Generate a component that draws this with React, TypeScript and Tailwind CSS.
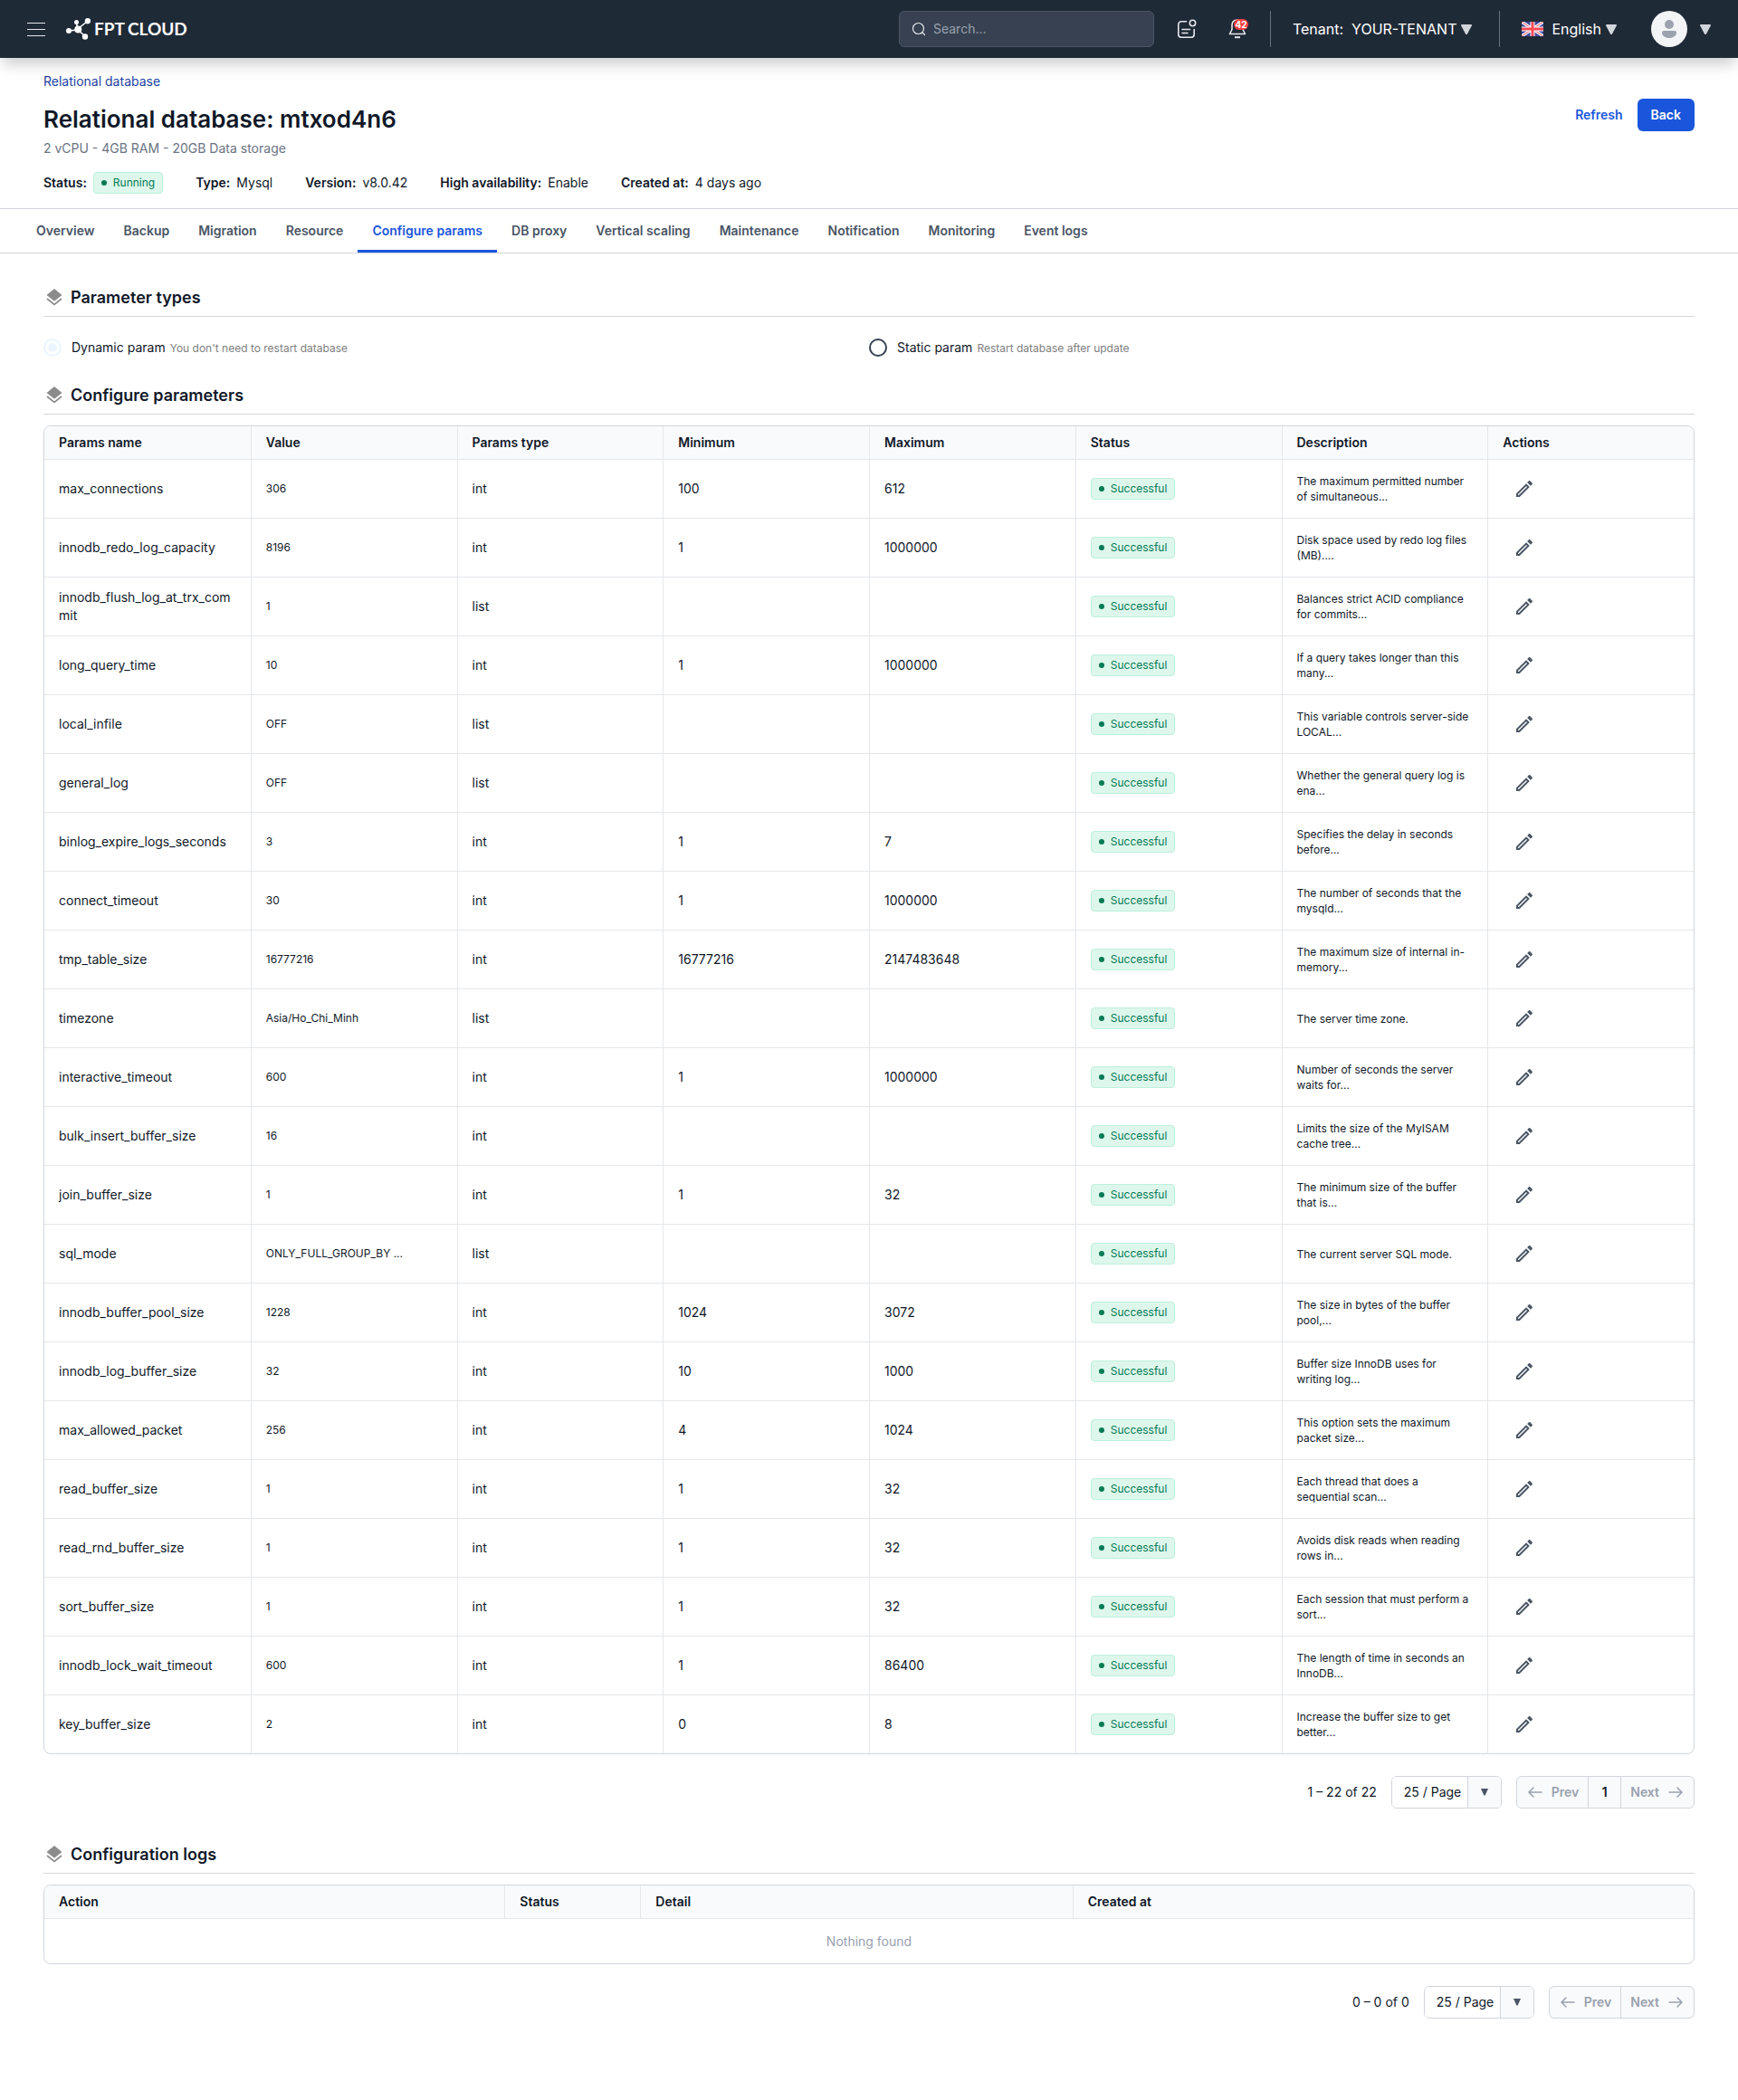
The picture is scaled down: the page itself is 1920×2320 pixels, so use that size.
import { useState } from "react";

type Param = [name: string, value: string, type: string, min: string, max: string, description: string];

const params: Param[] = [
  ["max_connections", "306", "int", "100", "612", "The maximum permitted number of simultaneous..."],
  ["innodb_redo_log_capacity", "8196", "int", "1", "1000000", "Disk space used by redo log files (MB)...."],
  ["innodb_flush_log_at_trx_commit", "1", "list", "", "", "Balances strict ACID compliance for commits..."],
  ["long_query_time", "10", "int", "1", "1000000", "If a query takes longer than this many..."],
  ["local_infile", "OFF", "list", "", "", "This variable controls server-side LOCAL..."],
  ["general_log", "OFF", "list", "", "", "Whether the general query log is ena..."],
  ["binlog_expire_logs_seconds", "3", "int", "1", "7", "Specifies the delay in seconds before..."],
  ["connect_timeout", "30", "int", "1", "1000000", "The number of seconds that the mysqld..."],
  ["tmp_table_size", "16777216", "int", "16777216", "2147483648", "The maximum size of internal in-memory..."],
  ["timezone", "Asia/Ho_Chi_Minh", "list", "", "", "The server time zone."],
  ["interactive_timeout", "600", "int", "1", "1000000", "Number of seconds the server waits for..."],
  ["bulk_insert_buffer_size", "16", "int", "", "", "Limits the size of the MyISAM cache tree..."],
  ["join_buffer_size", "1", "int", "1", "32", "The minimum size of the buffer that is..."],
  ["sql_mode", "ONLY_FULL_GROUP_BY ...", "list", "", "", "The current server SQL mode."],
  ["innodb_buffer_pool_size", "1228", "int", "1024", "3072", "The size in bytes of the buffer pool,..."],
  ["innodb_log_buffer_size", "32", "int", "10", "1000", "Buffer size InnoDB uses for writing log..."],
  ["max_allowed_packet", "256", "int", "4", "1024", "This option sets the maximum packet size..."],
  ["read_buffer_size", "1", "int", "1", "32", "Each thread that does a sequential scan..."],
  ["read_rnd_buffer_size", "1", "int", "1", "32", "Avoids disk reads when reading rows in..."],
  ["sort_buffer_size", "1", "int", "1", "32", "Each session that must perform a sort..."],
  ["innodb_lock_wait_timeout", "600", "int", "1", "86400", "The length of time in seconds an InnoDB..."],
  ["key_buffer_size", "2", "int", "0", "8", "Increase the buffer size to get better..."],
];

const paramColumns = ["Params name", "Value", "Params type", "Minimum", "Maximum", "Status", "Description", "Actions"];

const tabs = [
  "Overview",
  "Backup",
  "Migration",
  "Resource",
  "Configure params",
  "DB proxy",
  "Vertical scaling",
  "Maintenance",
  "Notification",
  "Monitoring",
  "Event logs",
];

function Caret() {
  return (
    <svg viewBox="0 0 12 11" className="h-[11px] w-3 text-gray-300" fill="currentColor" aria-hidden="true">
      <path d="M.9 0h10.200c.7 0 1.100.7.8 1.300L7 10.400c-.4.8-1.500.8-2 0L.1 1.300C-.2.700.2 0 .9 0z" />
    </svg>
  );
}

function Logo() {
  return (
    <a href="#home" className="flex items-center gap-1 text-white" aria-label="FPT Cloud">
      <svg viewBox="0 0 27 24" className="h-6 w-[27px]" fill="currentColor" aria-hidden="true">
        <path d="M3 14l10-1M11 4l2 8M24 3L13 12M13 13l8 7" stroke="currentColor" strokeWidth="1.600" fill="none" />
        <circle cx="3" cy="14" r="3" />
        <circle cx="11.500" cy="4.500" r="2.500" />
        <circle cx="24" cy="3.200" r="3.200" />
        <circle cx="13.300" cy="12.500" r="4" />
        <circle cx="21" cy="20.500" r="3.200" />
      </svg>
      <span className="flex gap-[3px] font-['Lato',sans-serif] text-[19px] leading-6 font-bold">
        <span>FPT</span>
        <span>CLOUD</span>
      </span>
    </a>
  );
}

function Flag() {
  return (
    <svg viewBox="0 0 24 16" className="h-4 w-6" aria-hidden="true">
      <path fill="#3f4a9e" d="M0 0h24v16H0z" />
      <path d="M0 0l24 16M24 0L0 16" stroke="#fff" strokeWidth="3.200" />
      <path d="M0 0l24 16M24 0L0 16" stroke="#ff4b55" strokeWidth="1" />
      <path d="M12 0v16M0 8h24" stroke="#fff" strokeWidth="5" />
      <path d="M12 0v16M0 8h24" stroke="#ff4b55" strokeWidth="3" />
    </svg>
  );
}

function Header() {
  return (
    <header className="relative z-10 flex h-16 items-center justify-between bg-[#1f2a37] px-[30px] text-white shadow-[0_10px_15px_-3px_rgba(0,0,0,0.2)]">
      <div className="flex items-center gap-[23px]">
        <button type="button" aria-label="Menu" className="flex w-5 flex-col gap-[6px]">
          <span className="h-px w-5 bg-gray-200" />
          <span className="h-px w-5 bg-gray-200" />
          <span className="h-px w-5 bg-gray-200" />
        </button>
        <Logo />
      </div>
      <div className="flex items-center">
        <label className="flex h-10 w-[282px] items-center gap-2 rounded-md border border-gray-600 bg-[#374151] pl-[13px]">
          <svg viewBox="0 0 16 16" className="size-4 text-gray-200" fill="none" stroke="currentColor" strokeWidth="1.200" aria-hidden="true">
            <circle cx="7.500" cy="7.500" r="6" />
            <path d="M12 12l2.500 2.500" strokeLinecap="round" />
          </svg>
          <input type="search" aria-label="Search" placeholder="Search..." className="min-w-0 flex-1 bg-transparent text-sm outline-none placeholder:text-gray-400" />
        </label>
        <button type="button" aria-label="News" className="ml-[25px]">
          <svg viewBox="0 0 22 22" className="size-[22px] text-gray-200" fill="none" stroke="currentColor" strokeWidth="1.600" strokeLinecap="round" aria-hidden="true">
            <path d="M10.500 2.800H5A3.200 3.200 0 0 0 1.800 6v11A3.200 3.200 0 0 0 5 20.200h11a3.200 3.200 0 0 0 3.200-3.200v-5.500" />
            <circle cx="17.500" cy="4.500" r="3.200" />
            <path d="M6 11.500h8.500M6 15.500h6" />
          </svg>
        </button>
        <button type="button" aria-label="Notifications" className="relative ml-[35px]">
          <svg viewBox="0 0 20 22" className="h-[22px] w-5 text-gray-200" fill="none" stroke="currentColor" strokeWidth="1.600" aria-hidden="true">
            <path d="M10 1C6 1 4 3.500 4 7v4.500L1.500 16.500h17L16 11.500V7c0-3.500-2-6-6-6z" strokeLinejoin="round" />
            <path d="M7 20.200h6" strokeWidth="2" />
          </svg>
          <span className="absolute top-0 left-[6px] flex h-3 w-4 items-center justify-center rounded-full bg-[#f04040] text-[10px] leading-3 font-bold">42</span>
        </button>
        <span className="ml-[26px] h-10 w-px bg-gray-500" />
        <button type="button" className="ml-6 flex items-center gap-[5px] text-base">
          <span>Tenant:&nbsp; YOUR-TENANT</span>
          <Caret />
        </button>
        <span className="ml-[30px] h-10 w-px bg-gray-500" />
        <button type="button" className="ml-6 flex items-center gap-[5px] text-base">
          <Flag />
          <span className="ml-1">English</span>
          <Caret />
        </button>
        <button type="button" aria-label="Account" className="ml-[38px] flex items-center gap-[14px]">
          <svg viewBox="0 0 40 40" className="size-10" aria-hidden="true">
            <circle cx="20" cy="20" r="20" fill="#f3f4f6" />
            <circle cx="20" cy="15" r="5" fill="#9ca3af" />
            <path d="M14 22h12a2 2 0 0 1 2 2c0 3.500-3.500 6-8 6s-8-2.500-8-6a2 2 0 0 1 2-2z" fill="#9ca3af" />
          </svg>
          <Caret />
        </button>
      </div>
    </header>
  );
}

function Badge({ children }: { children: string }) {
  return (
    <span className="inline-flex h-6 items-center gap-[7px] rounded border border-[#bcf0da] bg-[#def7ec] px-2 align-middle text-xs text-[#057a55]">
      <span className="size-[6px] rounded-full bg-[#057a55]" />
      {children}
    </span>
  );
}

function Fact({ label, children }: { label: string; children: React.ReactNode }) {
  return (
    <div className="flex items-center gap-[7px]">
      <dt className="font-semibold">{label}:</dt>
      <dd>{children}</dd>
    </div>
  );
}

function SectionTitle({ children }: { children: string }) {
  return (
    <h2 className="flex h-10 items-center gap-[9px] border-b border-[#d5d7db] pb-[2px] pl-[3px] text-lg font-semibold">
      <svg viewBox="0 0 18 20" className="h-5 w-[18px] text-[#8c8c8c]" fill="currentColor" aria-hidden="true">
        <path d="M9 0l8.500 7L9 13.800.5 7z" />
        <path d="M1 11l8 6.500 8-6.500" fill="none" stroke="currentColor" strokeWidth="1.700" />
      </svg>
      {children}
    </h2>
  );
}

function Arrow({ right = false }: { right?: boolean }) {
  return (
    <svg viewBox="0 0 16 12" className="h-3 w-4" fill="none" stroke="currentColor" strokeWidth="1.500" strokeLinecap="round" strokeLinejoin="round" aria-hidden="true">
      <path d={right ? "M1 6h14M10 1l5 5-5 5" : "M15 6H1M6 1L1 6l5 5"} />
    </svg>
  );
}

function Pagination({ id, range, pages }: { id: string; range: string; pages: number[] }) {
  return (
    <div className="mt-6 flex items-center justify-end gap-4 text-sm">
      <span>{range}</span>
      <label className="relative flex h-9 w-[122px] overflow-hidden rounded-md border border-gray-300">
        <select id={id} aria-label="Rows per page" className="w-full appearance-none bg-white pl-[13px] text-sm outline-none">
          <option>25 / Page</option>
          <option>50 / Page</option>
        </select>
        <span className="pointer-events-none absolute inset-y-0 right-0 flex w-[37px] items-center justify-center border-l border-gray-300 bg-gray-50 text-gray-600">
          <svg viewBox="0 0 8 8" className="size-2" fill="currentColor" aria-hidden="true">
            <path d="M0 0h8L4.600 7.500h-1.200z" />
          </svg>
        </span>
      </label>
      <div className="flex h-9 divide-x divide-gray-300 overflow-hidden rounded-md border border-gray-300 bg-gray-50 font-semibold text-gray-400">
        <button type="button" disabled className="flex items-center gap-[10px] pr-[10px] pl-3">
          <Arrow />
          Prev
        </button>
        {pages.map((page) => (
          <button key={page} type="button" className="w-9 text-gray-900">
            {page}
          </button>
        ))}
        <button type="button" disabled className="flex items-center gap-[10px] pr-3 pl-[10px]">
          Next
          <Arrow right />
        </button>
      </div>
    </div>
  );
}

const headCell = "h-9 border-l border-gray-200 px-4 text-left font-semibold first:border-l-0";
const cell = "border-t border-l border-gray-200 px-4 first:border-l-0";

function ParamsTable() {
  return (
    <div className="mt-3 overflow-hidden rounded-lg border border-gray-300">
      <table className="w-full table-fixed border-separate border-spacing-0 text-sm">
        <thead className="bg-gray-50">
          <tr>
            {paramColumns.map((column) => (
              <th key={column} scope="col" className={headCell}>
                {column}
              </th>
            ))}
          </tr>
        </thead>
        <tbody>
          {params.map(([name, value, type, min, max, description]) => (
            <tr key={name} className="h-[65px]">
              <td className={`${cell} break-all`}>{name}</td>
              <td className={`${cell} text-xs`}>{value}</td>
              <td className={cell}>{type}</td>
              <td className={cell}>{min}</td>
              <td className={cell}>{max}</td>
              <td className={cell}>
                <Badge>Successful</Badge>
              </td>
              <td className={`${cell} text-xs leading-[17px]`}>{description}</td>
              <td className={cell}>
                <button type="button" aria-label={`Edit ${name}`} className="flex size-12 items-center justify-center text-gray-600">
                  <svg viewBox="0 0 24 24" className="size-6" fill="currentColor" aria-hidden="true">
                    <path d="M14.060 9.020l.920.920L5.920 19H5v-.920l9.060-9.060M17.660 3c-.250 0-.510.100-.700.290l-1.830 1.830 3.750 3.750 1.830-1.830c.390-.390.390-1.020 0-1.410l-2.340-2.340c-.200-.200-.450-.290-.710-.290zm-3.600 3.190L3 17.250V21h3.750L17.810 9.940l-3.750-3.750z" />
                  </svg>
                </button>
              </td>
            </tr>
          ))}
        </tbody>
      </table>
    </div>
  );
}

function LogsTable() {
  return (
    <div className="mt-3 overflow-hidden rounded-lg border border-gray-300">
      <table className="w-full table-fixed border-separate border-spacing-0 text-sm">
        <thead className="bg-gray-50">
          <tr>
            <th scope="col" className={`${headCell} w-[27.9%]`}>Action</th>
            <th scope="col" className={`${headCell} w-[150px]`}>Status</th>
            <th scope="col" className={`${headCell} w-[26.2%]`}>Detail</th>
            <th scope="col" className={headCell}>Created at</th>
          </tr>
        </thead>
        <tbody>
          <tr>
            <td colSpan={4} className="h-[50px] border-t border-gray-200 text-center text-gray-400">
              Nothing found
            </td>
          </tr>
        </tbody>
      </table>
    </div>
  );
}

const radio =
  "mr-[11px] size-5 shrink-0 appearance-none rounded-full border-2 border-gray-700 disabled:border-[#ebf5ff] checked:bg-[#ebf5ff] checked:shadow-[inset_0_0_0_3px_white]";

function ParamType({ name, hint, selected = false }: { name: string; hint: string; selected?: boolean }) {
  return (
    <label className="flex items-center">
      <input type="radio" name="param-type" defaultChecked={selected} disabled={selected} className={radio} />
      <span className="flex items-baseline gap-[5px]">
        {name}
        <span className="text-xs text-[#808080]">{hint}</span>
      </span>
    </label>
  );
}

export default function App() {
  const [tab, setTab] = useState("Configure params");
  return (
    <div className="min-h-screen bg-white font-['Inter',sans-serif] text-gray-900">
      <Header />
      <div className="flex items-start justify-between px-12 py-4">
        <div>
          <a href="#databases" className="block text-sm text-[#1e429f]">
            Relational database
          </a>
          <h1 className="mt-3 text-[26px] leading-10 font-semibold">Relational database: mtxod4n6</h1>
          <p className="mt-[2px] text-sm text-gray-500">2 vCPU - 4GB RAM - 20GB Data storage</p>
          <dl className="mt-4 flex items-center gap-9 text-sm">
            <Fact label="Status">
              <Badge>Running</Badge>
            </Fact>
            <Fact label="Type">Mysql</Fact>
            <Fact label="Version">v8.0.42</Fact>
            <Fact label="High availability">Enable</Fact>
            <Fact label="Created at">4 days ago</Fact>
          </dl>
        </div>
        <div className="mt-[29px] flex items-center gap-4 text-sm font-semibold">
          <button type="button" className="text-[#1a56db]">Refresh</button>
          <button type="button" className="h-9 rounded-md bg-[#1a56db] px-[15px] text-white">Back</button>
        </div>
      </div>
      <nav className="flex border-y border-gray-300 px-6" aria-label="Database sections">
        {tabs.map((name) => (
          <button
            key={name}
            type="button"
            onClick={() => setTab(name)}
            className={`h-12 border-b-3 px-4 pt-[3px] text-sm font-semibold ${name === tab ? "border-[#1a56db] text-[#1a56db]" : "border-transparent text-gray-600"}`}
          >
            {name}
          </button>
        ))}
      </nav>
      <main className="px-12 pt-[30px] pb-[90px]">
        <section>
          <SectionTitle>Parameter types</SectionTitle>
          <div className="mt-6 grid h-5 grid-cols-2 text-sm">
            <ParamType name="Dynamic param" hint="You don't need to restart database" selected />
            <ParamType name="Static param" hint="Restart database after update" />
          </div>
        </section>
        <section className="mt-6">
          <SectionTitle>Configure parameters</SectionTitle>
          <ParamsTable />
          <Pagination id="params-page-size" range="1 – 22 of 22" pages={[1]} />
        </section>
        <section className="mt-8">
          <SectionTitle>Configuration logs</SectionTitle>
          <LogsTable />
          <Pagination id="logs-page-size" range="0 – 0 of 0" pages={[]} />
        </section>
      </main>
    </div>
  );
}
